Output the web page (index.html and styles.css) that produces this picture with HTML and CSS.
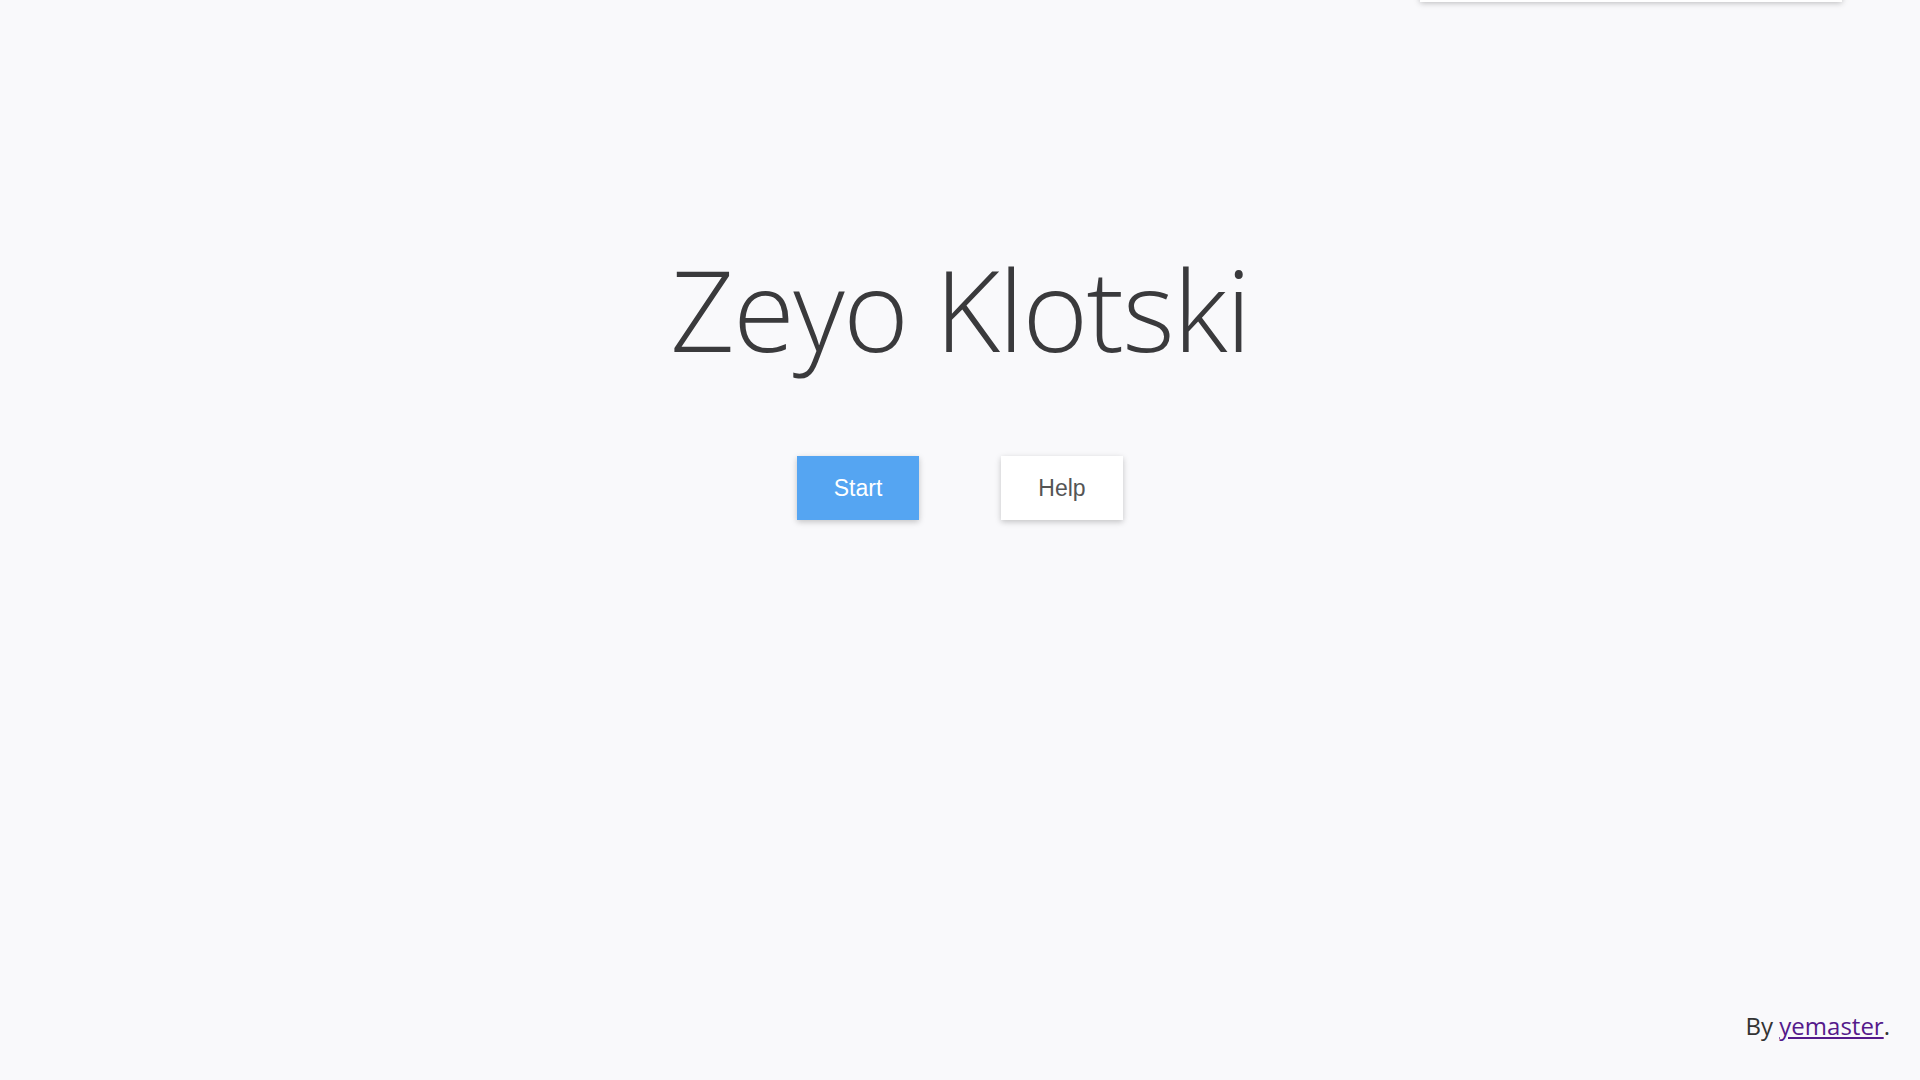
FILE: index.html
```html
<!DOCTYPE html>
<html lang="en">
<head>
<meta charset="utf-8">
<title>Zeyo Klotski</title>
<link rel="stylesheet" href="styles.css">
</head>
<body>
<div class="toast"></div>
<main class="home">
  <h1 class="title">Zeyo Klotski</h1>
  <div class="actions">
    <button class="btn btn-primary">Start</button>
    <button class="btn btn-light">Help</button>
  </div>
</main>
<footer class="footer">By <a href="#" class="author">yemaster</a>.</footer>
</body>
</html>
```
FILE: styles.css
```css
html, body {
  margin: 0;
  padding: 0;
  height: 100%;
}
body {
  background: #f9f9fb;
  color: #3a3a3c;
  font-family: "Open Sans", "Noto Sans", sans-serif;
  display: flex;
  flex-direction: column;
  overflow: hidden;
  position: relative;
}
.toast {
  position: absolute;
  top: -60px;
  left: 1420px;
  width: 422px;
  height: 62px;
  background: #fff;
  box-shadow: 0 1px 6px rgba(0, 0, 0, 0.25);
}
.home {
  flex: 1;
  display: flex;
  flex-direction: column;
  align-items: center;
  padding-top: 232px;
}
.title {
  margin: 0;
  font-weight: 300;
  font-size: 112px;
  line-height: 154px;
  color: #3a3a3c;
  letter-spacing: -1.5px;
}
.actions {
  display: flex;
  gap: 82px;
  margin-top: 70px;
}
.btn {
  border: none;
  width: 122px;
  height: 64px;
  font-family: "Liberation Sans", Arial, sans-serif;
  font-size: 23px;
  box-shadow: 0 2px 6px rgba(0, 0, 0, 0.22);
  cursor: pointer;
}
.btn-primary {
  background: #55a5f2;
  color: #fff;
}
.btn-light {
  background: #fff;
  color: #555;
}
.footer {
  text-align: right;
  padding: 0 30px 38px 0;
  font-size: 24px;
  color: #333;
}
.author {
  color: #551a8b;
}
```
